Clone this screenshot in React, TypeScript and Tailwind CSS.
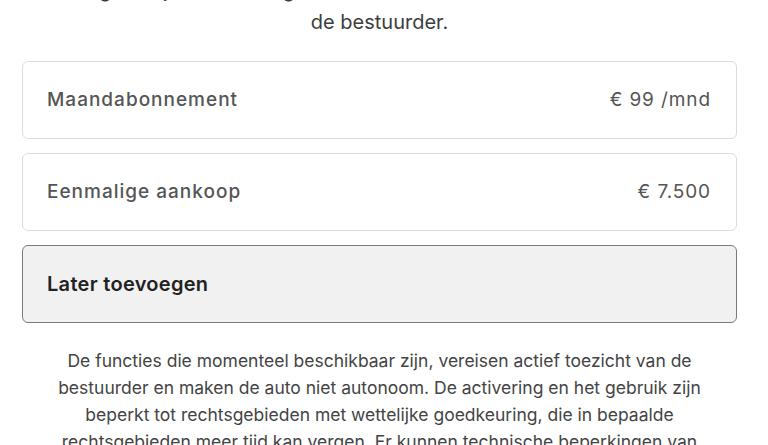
import React from "react";

const options = [
  { label: "Maandabonnement", price: "€ 99 /mnd" },
  { label: "Eenmalige aankoop", price: "€ 7.500" },
];

function App() {
  return (
    <div className="h-[445px] w-[768px] overflow-hidden bg-white pl-[22px] pr-[31px] font-['Inter',sans-serif]">
      <p className="mt-[-26px] text-center text-[20px] leading-[32px] text-[#3d3d3d]">
        Volledig zelfrijdend vermogen (onder toezicht) vereist actief toezicht van
        <br />
        de bestuurder.
      </p>

      <div className="mt-[23px] flex flex-col gap-[14px]">
        {options.map((o) => (
          <div
            key={o.label}
            className="flex h-[78px] items-center justify-between rounded-md border border-[#dcdcdc] bg-white pl-6 pr-[25px]"
          >
            <span className="text-[19px] font-medium tracking-[1px] text-[#555]">{o.label}</span>
            <span className="text-[19px] tracking-[0.9px] text-[#555]">{o.price}</span>
          </div>
        ))}
        <div className="flex h-[78px] items-center rounded-md border border-[#7a7a7a] bg-[#f1f1f1] px-6">
          <span className="text-[20px] font-semibold tracking-[0.3px] text-[#222]">Later toevoegen</span>
        </div>
      </div>

      <p className="mx-auto mt-[24px] max-w-[668px] text-center text-[17.5px] leading-[27px] text-[#444]">
        De functies die momenteel beschikbaar zijn, vereisen actief toezicht van de
        bestuurder en maken de auto niet autonoom. De activering en het gebruik zijn
        beperkt tot rechtsgebieden met wettelijke goedkeuring, die in bepaalde
        rechtsgebieden meer tijd kan vergen. Er kunnen technische beperkingen van
        toepassing zijn.
      </p>
    </div>
  );
}

export default App;
